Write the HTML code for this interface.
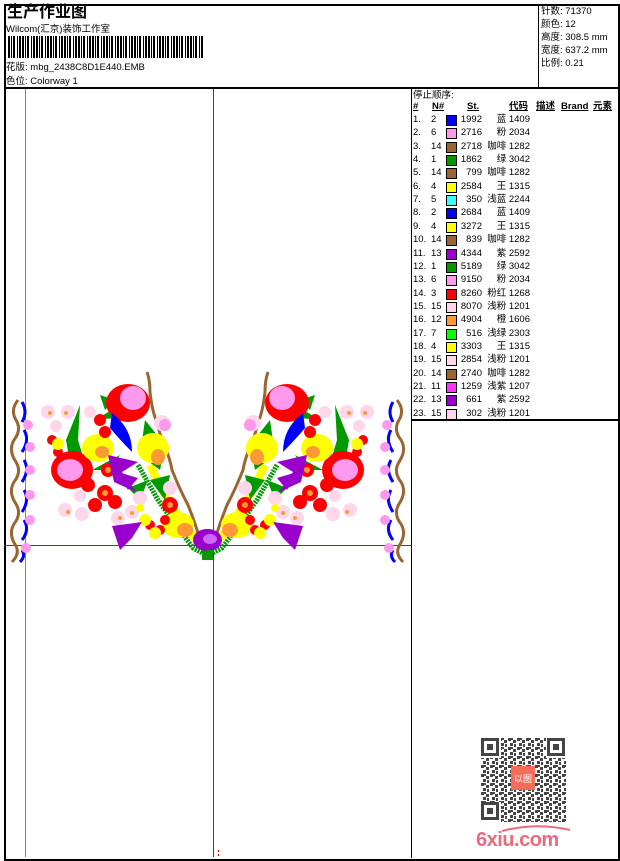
<!DOCTYPE html>
<html><head><meta charset="utf-8"><style>
body{margin:0;width:620px;height:860px;background:#fff;position:relative;overflow:hidden;font-family:"Liberation Sans","WenQuanYi Zen Hei","Noto Sans CJK SC",sans-serif;color:#000}
.a{position:absolute;white-space:nowrap}
.s{font-size:9.5px;line-height:11px}
.r{position:absolute;font-size:9.5px;line-height:12px;height:13px;white-space:nowrap}
.sw{position:absolute;width:9px;height:9px;border:1px solid #000;top:1px}
.h{position:absolute;font-size:9.5px;line-height:12px;height:12px;font-weight:bold;text-decoration:underline;top:101px}
</style></head><body>
<div class="a" style="left:4px;top:4px;width:612px;height:853px;border:2px solid #000;"></div>
<div class="a" style="left:4px;top:87px;width:614px;height:2px;background:#000"></div>
<div class="a" style="left:538px;top:4px;width:1px;height:84px;background:#000"></div>
<div class="a" style="left:411px;top:88px;width:1px;height:770px;background:#000"></div>
<div class="a" style="left:411px;top:419px;width:207px;height:2px;background:#000"></div>

<div class="a" style="left:7px;top:3px;font-size:16px;font-weight:bold;line-height:20px">生产作业图</div>
<div class="a s" style="left:6px;top:24px">Wilcom(汇京)装饰工作室</div>
<svg class="a" style="left:8px;top:36px" width="196" height="22">
<defs><pattern id="bc" width="14" height="22" patternUnits="userSpaceOnUse">
<rect x="0" width="2" height="22"/><rect x="3" width="1" height="22"/><rect x="5" width="2" height="22"/><rect x="9" width="1" height="22"/><rect x="11" width="2" height="22"/></pattern></defs>
<rect width="196" height="22" fill="url(#bc)"/></svg>
<div class="a s" style="left:6px;top:62px">花版: mbg_2438C8D1E440.EMB</div>
<div class="a s" style="left:6px;top:76px">色位: Colorway 1</div>
<div class="a s" style="left:541px;top:6px">针数: 71370</div>
<div class="a s" style="left:541px;top:19px">颜色: 12</div>
<div class="a s" style="left:541px;top:32px">高度: 308.5 mm</div>
<div class="a s" style="left:541px;top:45px">宽度: 637.2 mm</div>
<div class="a s" style="left:541px;top:58px">比例: 0.21</div>

<div class="a s" style="left:413px;top:90px">停止顺序:</div>
<div class="h" style="left:413px">#</div>
<div class="h" style="left:432px">N#</div>
<div class="h" style="left:467px">St.</div>
<div class="h" style="left:509px">代码</div>
<div class="h" style="left:536px">描述</div>
<div class="h" style="left:561px">Brand</div>
<div class="h" style="left:593px">元素</div>
<div id="rows"></div>
<script>
var d=[["1.","2","#0000ff","1992","蓝 1409"],["2.","6","#ff99ee","2716","粉 2034"],["3.","14","#996633","2718","咖啡 1282"],["4.","1","#009900","1862","绿 3042"],["5.","14","#996633","799","咖啡 1282"],["6.","4","#ffff00","2584","王 1315"],["7.","5","#33ffff","350","浅蓝 2244"],["8.","2","#0000ff","2684","蓝 1409"],["9.","4","#ffff00","3272","王 1315"],["10.","14","#996633","839","咖啡 1282"],["11.","13","#9900cc","4344","紫 2592"],["12.","1","#009900","5189","绿 3042"],["13.","6","#ff99ee","9150","粉 2034"],["14.","3","#ff0000","8260","粉红 1268"],["15.","15","#ffd6ea","8070","浅粉 1201"],["16.","12","#ff9933","4904","橙 1606"],["17.","7","#00ff00","516","浅绿 2303"],["18.","4","#ffff00","3303","王 1315"],["19.","15","#ffd6ea","2854","浅粉 1201"],["20.","14","#996633","2740","咖啡 1282"],["21.","11","#ff33ff","1259","浅紫 1207"],["22.","13","#9900cc","661","紫 2592"],["23.","15","#ffd6ea","302","浅粉 1201"]];
var h="";for(var i=0;i<d.length;i++){var y=114+i*13.35;var r=d[i];
h+='<div class="r" style="left:413px;top:'+y+'px">'+r[0]+'</div><div class="r" style="left:431px;top:'+y+'px">'+r[1]+'</div><div class="sw" style="left:446px;top:'+(y+1)+'px;background:'+r[2]+'"></div><div class="r" style="left:458px;width:24px;text-align:right;top:'+y+'px">'+r[3]+'</div><div class="r" style="left:482px;width:48px;text-align:right;top:'+y+'px">'+r[4]+'</div>';}
document.getElementById("rows").innerHTML=h;
</script>

<div class="a" style="left:25px;top:89px;width:1px;height:768px;background:#2c2"></div>
<div class="a" style="left:213px;top:89px;width:1px;height:768px;background:#e00"></div>
<div class="a" style="left:4px;top:545px;width:407px;height:1px;background:#e00"></div>
<div class="a" style="left:218px;top:850px;width:1px;height:2px;background:#e00"></div>
<div class="a" style="left:218px;top:854px;width:1px;height:2px;background:#e00"></div>

<svg class="a" style="left:0;top:365px" width="420" height="205" viewBox="0 365 420 205">
<g id="L">
 <path d="M18 400 Q10 410 16 420 Q22 430 14 440 Q8 450 16 462 Q22 472 14 482 Q8 492 16 504 Q22 514 14 524 Q8 534 16 546 Q20 554 12 562" fill="none" stroke="#996633" stroke-width="3"/>
 <path d="M22 402 Q28 412 22 422 M24 430 Q30 440 22 452 M24 460 Q30 470 22 482 M24 490 Q30 500 22 512 M24 520 Q30 530 22 540 M22 550 Q26 556 20 562" fill="none" stroke="#0000ff" stroke-width="3"/>
 <g fill="#ff99ee"><circle cx="28" cy="425" r="5"/><circle cx="30" cy="447" r="5"/><circle cx="30" cy="470" r="5"/><circle cx="30" cy="495" r="5"/><circle cx="30" cy="520" r="5"/><circle cx="26" cy="548" r="5"/></g>
 <path d="M147 372 Q150 380 150 392 Q152 410 156 420 Q160 435 164 445 Q170 458 172 470 Q180 490 188 505 Q196 525 200 540 Q204 552 208 558" fill="none" stroke="#996633" stroke-width="3"/>
 <path d="M138 465 L158 500 L176 525 L193 548 L208 556" fill="none" stroke="#009900" stroke-width="5" stroke-dasharray="2 1"/>
 <path d="M150 465 L165 495 L182 522 L198 542" fill="none" stroke="#ffff00" stroke-width="8"/>
 <g fill="#009900"><path d="M80 405 L66 440 L72 475 L90 480 L78 440 Z"/><path d="M100 395 L115 400 L105 410 Z"/><path d="M145 420 L165 445 L160 470 L140 455 Z"/><path d="M95 420 L120 405 L115 418 Z"/><path d="M92 470 L120 455 L110 470 Z"/><path d="M150 480 L170 475 L165 500 Z"/><path d="M128 488 L148 480 L140 500 Z"/></g>
 <g fill="#ffd6ea"><circle cx="48" cy="412" r="7"/><circle cx="68" cy="412" r="7"/><circle cx="56" cy="426" r="6"/><circle cx="65" cy="510" r="7"/><circle cx="82" cy="514" r="7"/><circle cx="118" cy="518" r="7"/><circle cx="132" cy="512" r="7"/><circle cx="140" cy="498" r="7"/><circle cx="90" cy="412" r="6"/><circle cx="170" cy="488" r="7"/><circle cx="80" cy="496" r="6"/><circle cx="162" cy="423" r="8"/></g>
 <g fill="#ff9933"><circle cx="50" cy="413" r="2"/><circle cx="66" cy="413" r="2"/><circle cx="68" cy="512" r="2"/><circle cx="132" cy="513" r="2"/><circle cx="120" cy="518" r="2"/></g>
 <ellipse cx="128" cy="403" rx="22" ry="19" fill="#ff0000"/><ellipse cx="133" cy="398" rx="13" ry="12" fill="#ff99ee"/>
 <ellipse cx="72" cy="470" rx="21" ry="19" fill="#ff0000"/><ellipse cx="70" cy="470" rx="13" ry="11" fill="#ff99ee"/>
 <path d="M112 413 Q132 428 132 452 Q120 440 110 428 Z" fill="#0000ff"/>
 <ellipse cx="98" cy="448" rx="16" ry="14" fill="#ffff00"/><ellipse cx="102" cy="452" rx="7" ry="6" fill="#ff9933"/>
 <ellipse cx="153" cy="448" rx="16" ry="15" fill="#ffff00"/><ellipse cx="158" cy="457" rx="7" ry="8" fill="#ff9933"/>
 <ellipse cx="178" cy="525" rx="16" ry="13" fill="#ffff00"/><ellipse cx="185" cy="530" rx="8" ry="7" fill="#ff9933"/>
 <ellipse cx="165" cy="425" rx="6" ry="6" fill="#ff99ee"/>
 <g fill="#ff0000"><circle cx="105" cy="493" r="8"/><circle cx="95" cy="505" r="7"/><circle cx="115" cy="502" r="7"/><circle cx="108" cy="470" r="7"/><circle cx="88" cy="485" r="7"/><circle cx="52" cy="440" r="5"/><circle cx="58" cy="452" r="5"/><circle cx="170" cy="505" r="8"/><circle cx="100" cy="420" r="6"/><circle cx="105" cy="432" r="6"/><circle cx="150" cy="525" r="5"/><circle cx="160" cy="530" r="5"/><circle cx="165" cy="520" r="5"/></g>
 <g fill="#ff9933"><circle cx="105" cy="493" r="3"/><circle cx="108" cy="470" r="3"/><circle cx="170" cy="505" r="3"/></g>
 <g fill="#ffff00"><circle cx="58" cy="444" r="6"/><circle cx="145" cy="520" r="6"/><circle cx="155" cy="533" r="6"/><circle cx="140" cy="508" r="4"/></g>
 <g fill="#9900cc"><path d="M108 455 L138 462 L122 472 L136 492 L114 482 Z"/><path d="M112 526 L142 522 L132 538 L120 550 Z"/><path d="M118 472 L138 478 L128 490 Z"/></g>
 <ellipse cx="207" cy="540" rx="14" ry="11" fill="#9900cc"/><ellipse cx="205" cy="539" rx="7" ry="5" fill="#cc66ff"/>
 <rect x="202" y="550" width="6" height="10" fill="#009900"/>
</g>
<use href="#L" transform="translate(415,0) scale(-1,1)"/>
</svg>

<svg class="a" style="left:481px;top:738px" width="85" height="84" viewBox="0 0 85 84">
<defs><pattern id="qp" width="9" height="9" patternUnits="userSpaceOnUse"><rect x="0" y="0" width="3" height="3" fill="#444"/><rect x="5" y="2" width="3" height="3" fill="#444"/><rect x="2" y="5" width="3" height="3" fill="#444"/><rect x="6" y="6" width="2" height="3" fill="#444"/><rect x="3" y="0" width="2" height="2" fill="#444"/></pattern></defs>
<rect width="85" height="84" fill="url(#qp)"/>
<g fill="#fff"><rect width="20" height="20"/><rect x="65" width="20" height="20"/><rect y="64" width="20" height="20"/></g>
<g fill="none" stroke="#444" stroke-width="3"><rect x="1.5" y="1.5" width="15" height="15"/><rect x="67.5" y="1.5" width="15" height="15"/><rect x="1.5" y="65.5" width="15" height="15"/></g>
<g fill="#444"><rect x="6" y="6" width="6" height="6"/><rect x="72" y="6" width="6" height="6"/><rect x="6" y="70" width="6" height="6"/></g>
<rect x="30" y="28" width="24" height="24" fill="#f76b5a"/>
<text x="42" y="44" font-size="9" fill="#fff" text-anchor="middle">以图</text>
</svg>
<div class="a" style="left:476px;top:829px;font-size:20px;font-weight:bold;color:#ec6a80;letter-spacing:-0.5px;line-height:22px">6xiu.com</div>
<svg class="a" style="left:500px;top:824px" width="72" height="8"><path d="M2 7 Q36 -2 70 6" fill="none" stroke="#ec6a80" stroke-width="2"/></svg>
</body></html>
